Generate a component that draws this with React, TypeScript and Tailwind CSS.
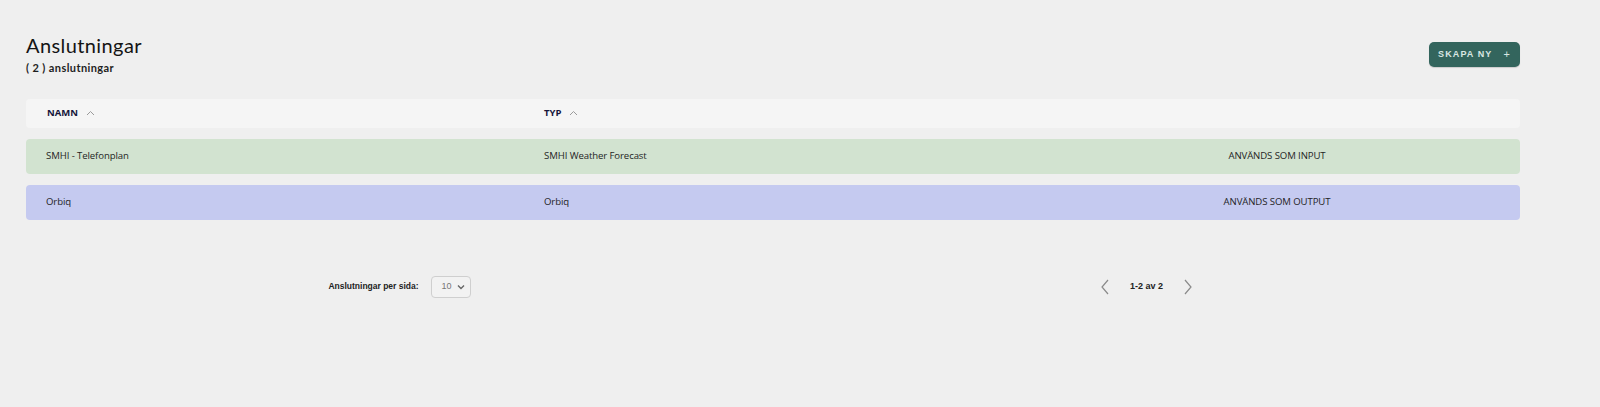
import React from "react";

const ChevronUp = () => (
  <svg width="9" height="6" viewBox="0 0 9 6" fill="none" className="ml-[8px]">
    <path d="M1 5L4.5 1.5L8 5" stroke="#9a9a9a" strokeWidth="1" />
  </svg>
);

export default function App() {
  const rows = [
    { name: "SMHI - Telefonplan", type: "SMHI Weather Forecast", status: "ANVÄNDS SOM INPUT", bg: "bg-[#d2e3d0]" },
    { name: "Orbiq", type: "Orbiq", status: "ANVÄNDS SOM OUTPUT", bg: "bg-[#c5caf0]" },
  ];
  return (
    <div className="min-h-[407px] w-full bg-[#efefef] pl-[26px] pr-[80px] pt-[33px]" style={{ fontFamily: "'Open Sans', sans-serif" }}>
      <div className="flex items-start justify-between">
        <div>
          <h1 className="text-[20px] leading-[24px] text-[#141414] tracking-[0.4px]" style={{ fontFamily: "Lato, 'Noto Sans', sans-serif" }}>Anslutningar</h1>
          <div className="mt-[3px] text-[11px] font-bold text-[#1e1e1e] tracking-[0.4px]" style={{ fontFamily: "Lato, 'Noto Sans', sans-serif" }}>( 2 ) anslutningar</div>
        </div>
        <button className="mt-[9px] flex h-[25px] w-[91px] items-center justify-center gap-[11px] rounded-[5px] bg-[#33655d] text-[9px] font-bold tracking-[1.1px] text-[#d9e7e3] shadow-[0_1px_1px_rgba(0,0,0,0.15)]" style={{ fontFamily: "'Liberation Sans', Arial, sans-serif" }}>
          <span>SKAPA NY</span>
          <span className="text-[11px] font-normal">+</span>
        </button>
      </div>

      <div className="mt-[22px] grid h-[29px] grid-cols-3 items-center rounded-[4px] bg-[#f5f5f5] text-[9.5px] font-bold text-[#14143a]">
        <div className="flex items-center pl-[21px]">NAMN<ChevronUp /></div>
        <div className="flex items-center pl-[20px]">TYP<ChevronUp /></div>
        <div></div>
      </div>

      <div className="mt-[11px] flex flex-col gap-[11px]">
        {rows.map((r) => (
          <div key={r.name} className={`grid h-[35px] grid-cols-3 items-center rounded-[4px] text-[9.6px] tracking-[-0.1px] text-[#1f1f1f] ${r.bg}`}>
            <div className="pl-[20px]">{r.name}</div>
            <div className="pl-[20px]">{r.type}</div>
            <div className="pl-[12px] text-center">{r.status}</div>
          </div>
        ))}
      </div>

      <div className="mt-[56px] flex items-center" style={{ fontFamily: "'Liberation Sans', Arial, sans-serif" }}>
        <div className="flex flex-1 items-center justify-center">
          <span className="text-[8.5px] font-bold text-[#222]">Anslutningar per sida:</span>
          <div className="ml-[12px] flex h-[22px] w-[40px] items-center justify-between rounded-[4px] border border-[#cfcfcf] bg-[#f2f2f2] pl-[10px] pr-[5px]">
            <span className="text-[9px] text-[#777]">10</span>
            <svg width="8" height="6" viewBox="0 0 8 6" fill="none">
              <path d="M1 1.5L4 4.5L7 1.5" stroke="#666" strokeWidth="1.4" />
            </svg>
          </div>
        </div>
        <div className="flex flex-1 items-center justify-center">
          <svg width="10" height="16" viewBox="0 0 10 16" fill="none">
            <path d="M8 1L2 8L8 15" stroke="#8a8a8a" strokeWidth="1.2" />
          </svg>
          <span className="mx-[20px] text-[9px] font-bold text-[#222]">1-2 av 2</span>
          <svg width="10" height="16" viewBox="0 0 10 16" fill="none">
            <path d="M2 1L8 8L2 15" stroke="#8a8a8a" strokeWidth="1.2" />
          </svg>
        </div>
      </div>
    </div>
  );
}
